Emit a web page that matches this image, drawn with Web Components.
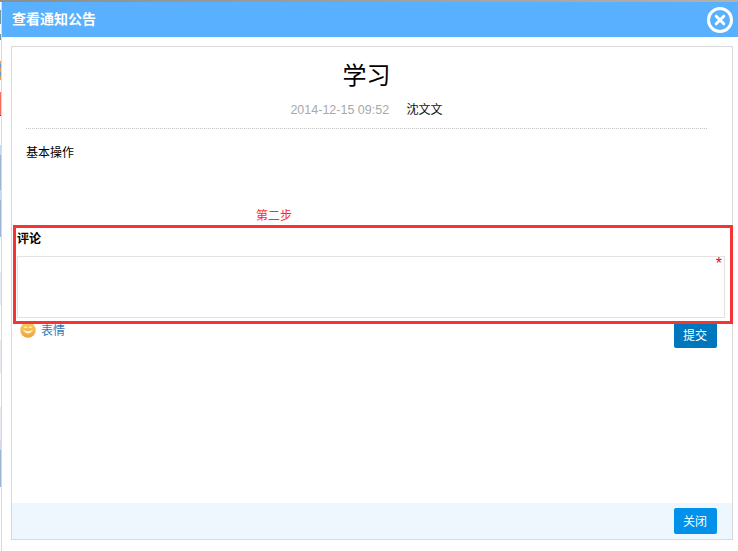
<!DOCTYPE html>
<html lang="zh"><head><meta charset="utf-8">
<style>
html,body{margin:0;padding:0;width:738px;height:551px;overflow:hidden;background:#fff}
body{font:12px "Liberation Sans","Noto Sans CJK SC",sans-serif}
</style></head><body>
<notice-dialog>
  <notice-article></notice-article>
  <comment-box></comment-box>
</notice-dialog>
<script>
function def(name,html){customElements.define(name,class extends HTMLElement{
  constructor(){super();this.attachShadow({mode:'open'}).innerHTML=html}
})}
def('blue-button',`<style>:host{display:inline-flex;align-items:center;justify-content:center;box-sizing:border-box;width:43px;height:26px;padding:0 1px 2px 0;border-radius:2px;background:var(--bg,#0091ea);color:#fff;font:12px "Liberation Sans","Noto Sans CJK SC",sans-serif}</style><slot></slot>`);
def('notice-article',`<style>
:host{display:block;height:178px;padding:0 25px 0 14px;position:relative}
h1{margin:0;padding-top:11px;height:32px;font:400 24px/32px "Noto Sans CJK SC",sans-serif;color:#000;text-align:center}
.meta{margin-top:10px;height:20px;line-height:20px;text-align:center;color:#a9a9a9;font-size:12.5px}
.meta b{font-weight:400;font-size:12px;color:#111;margin-left:14px}
hr{border:0;border-top:1px dotted #c4c4c4;margin:8px 0 0}
.body{margin-top:15px;line-height:18px;color:#000}
.step{position:absolute;left:244px;top:160px;line-height:18px;color:#ff2a2a}
</style>
<h1>学习</h1>
<div class="meta">2014-12-15 09:52 <b>沈文文</b></div>
<hr>
<div class="body">基本操作</div>
<div class="step">第二步</div>`);
def('comment-box',`<style>
:host{display:block;position:relative;padding:0 3px 0 4px;height:100px}
.title{font-weight:700;color:#000;height:31px;line-height:28px;padding-left:1px;box-sizing:border-box}
.area{box-sizing:border-box;height:62px;width:708px;margin-left:1px;border:1px solid #e2e2e2;position:relative}
.area i{position:absolute;right:2px;top:-1px;font:normal 16px/16px "Liberation Sans",sans-serif;color:#d0102a}
.row{display:flex;align-items:flex-start;justify-content:space-between;padding:0 12px 0 4px;margin-top:3px}
.emo{display:flex;align-items:center;gap:5px;color:#337ab7;height:16px}
.emo svg{margin-top:2px}
.btn{--bg:#0076bd;margin-top:1px}
.mark{position:absolute;left:1px;top:0;width:720px;height:99px;box-sizing:border-box;border:3px solid #f53535;pointer-events:none}
svg{display:block}
</style>
<div class="title">评论</div>
<div class="area"><i>*</i></div>
<div class="row">
<div class="emo"><svg width="16" height="16" viewBox="0 0 16 16"><defs><linearGradient id="g" x1="0" y1="0" x2="0" y2="1"><stop offset="0" stop-color="#f9d060"/><stop offset="1" stop-color="#f2a040"/></linearGradient></defs><circle cx="8" cy="8" r="7.8" fill="url(#g)"/><path d="M2.6 7.6Q8 15.4 13.4 7.6Q8 10.8 2.6 7.6Z" fill="#fff8e6"/><path d="M4.4 6Q5.6 4 6.8 6M9.2 6Q10.4 4 11.6 6" fill="none" stroke="#fff4d6" stroke-width="1.1"/></svg><span>表情</span></div>
<blue-button class="btn">提交</blue-button>
</div>
<div class="mark"></div>`);
def('notice-dialog',`<style>
:host{display:block;box-sizing:border-box;width:738px;height:551px;position:relative;background:#fff;padding:2px 0 0 2px}
.strip{position:absolute;left:0;top:0;bottom:0;width:1px;border-right:1px solid #d8d8e4;background:linear-gradient(to bottom,#fff 0 10px,#6f9aa3 10px 24px,#fff 24px 34px,#6f9aa3 34px 40px,#fff 40px 61px,#e0a060 61px 64px,#6a9cc8 64px 68px,#e0a060 68px 72px,#6a9cc8 72px 76px,#e0a060 76px 80px,#fff 80px 92px,#f76b5c 92px 115px,#b03030 115px 116px,#fff 116px 145px,#c8daf0 145px 155px,#9ab6d4 155px 190px,#c8daf0 190px 200px,#9ab6d4 200px 237px,#fff 237px 272px,#e6ebf2 272px 305px,#fff 305px 340px,#e6ebf2 340px 373px,#fff 373px 407px,#e6ebf2 407px 440px,#d8d8e4 440px 450px,#9ab6d4 450px 487px,#fff 487px)}
.strip2{position:absolute;left:0;top:0;right:0;height:2px;background:linear-gradient(to right,#8a9090,#b5b0a8)}
header{height:35px;background:#58b0ff;display:flex;align-items:center;justify-content:space-between;padding:0 4px 0 10px;color:#fff;font-weight:700;font-size:14px}
header span{margin-bottom:4px}
.panel{box-sizing:border-box;margin:9px 0 0 9px;width:722px;height:494px;border:1px solid #d9d9d9;display:flex;flex-direction:column}
.grow{flex:1}
footer{height:36px;background:#eff7fe;display:flex;align-items:center;justify-content:flex-end;padding-right:15px}
</style>
<div class="strip"></div><div class="strip2"></div>
<header><span>查看通知公告</span>
<svg width="28" height="28" viewBox="0 0 28 28"><circle cx="14" cy="14" r="11.5" fill="none" stroke="#fff" stroke-width="3"/><path d="M10.2 10.2l7.6 7.6M17.8 10.2l-7.6 7.6" stroke="#fff" stroke-width="3" stroke-linecap="round"/></svg></header>
<div class="panel"><slot></slot><div class="grow"></div><footer><blue-button>关闭</blue-button></footer></div>`);
</script></body></html>
